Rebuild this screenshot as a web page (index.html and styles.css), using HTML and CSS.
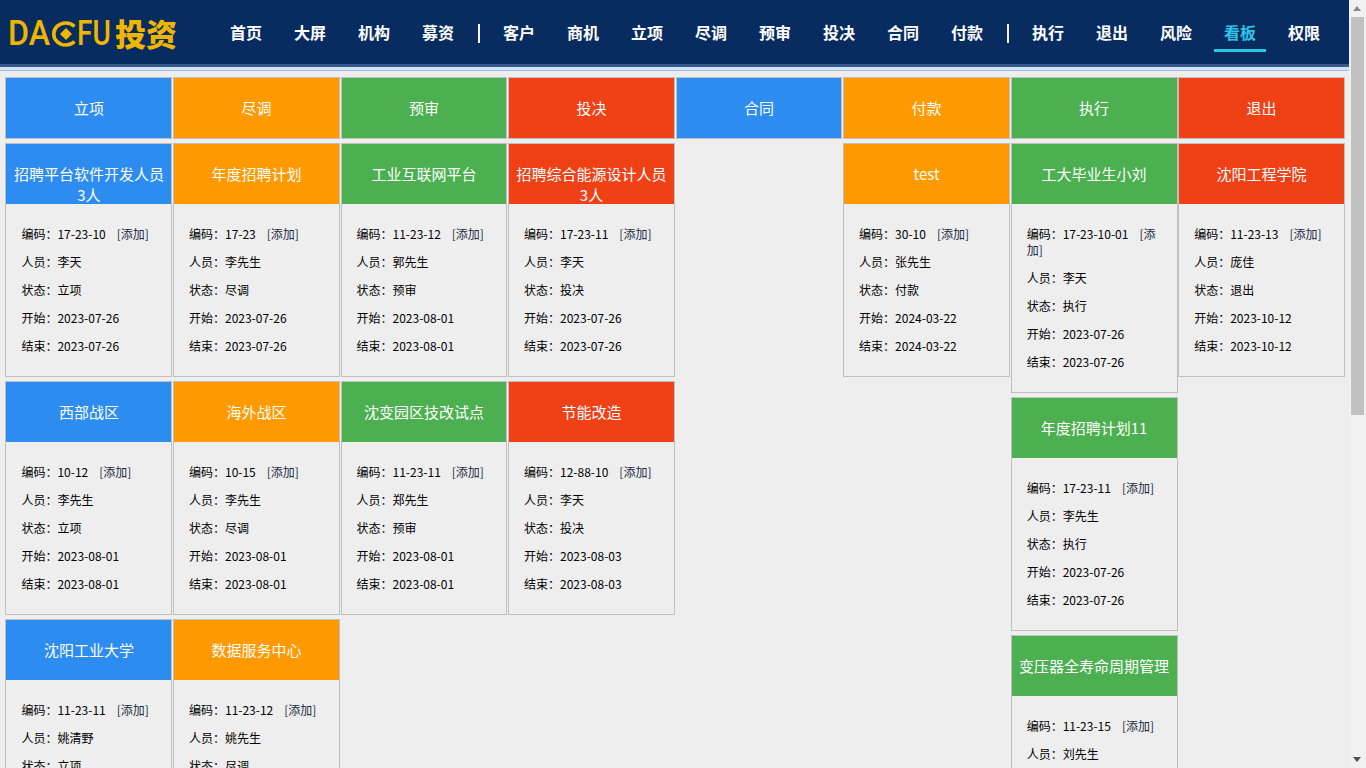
FILE: index.html
```html
<!DOCTYPE html>
<html lang="zh-CN">
<head>
<meta charset="utf-8">
<title>看板</title>
<link rel="stylesheet" href="styles.css">
</head>
<body>
<div class="page">
  <header class="topbar">
    <div class="logo">
      <span class="logo-latin da"><span class="squeeze">DA</span></span><svg class="logo-c" viewBox="0 0 26 26" width="26" height="26" aria-hidden="true"><path d="M23.5 5.5A12 11 0 1 0 23.5 20.5" fill="none" stroke="#eeb600" stroke-width="3.6"/><path d="M15 7L21 13L15 19L9 13Z" fill="#eeb600"/></svg><span class="logo-latin fu"><span class="squeeze">FU</span></span><span class="logo-cjk">投资</span>
    </div>
    <nav class="nav">
      <a class="nav-item">首页</a><a class="nav-item">大屏</a><a class="nav-item">机构</a><a class="nav-item">募资</a>
      <span class="nav-sep"></span>
      <a class="nav-item">客户</a><a class="nav-item">商机</a><a class="nav-item">立项</a><a class="nav-item">尽调</a><a class="nav-item">预审</a><a class="nav-item">投决</a><a class="nav-item">合同</a><a class="nav-item">付款</a>
      <span class="nav-sep"></span>
      <a class="nav-item">执行</a><a class="nav-item">退出</a><a class="nav-item">风险</a><a class="nav-item active">看板</a><a class="nav-item">权限</a>
    </nav>
  </header>
  <div class="rule"></div>
  <main class="board">
    <section class="col blue">
      <div class="col-title">立项</div>
      <article class="card"><h3>招聘平台软件开发人员3人</h3><div class="info"><p>编码&#xFF1A;17-23-10<a class="add">[添加]</a></p><p>人员&#xFF1A;李天</p><p>状态&#xFF1A;立项</p><p>开始&#xFF1A;2023-07-26</p><p>结束&#xFF1A;2023-07-26</p></div></article>
      <article class="card"><h3>西部战区</h3><div class="info"><p>编码&#xFF1A;10-12<a class="add">[添加]</a></p><p>人员&#xFF1A;李先生</p><p>状态&#xFF1A;立项</p><p>开始&#xFF1A;2023-08-01</p><p>结束&#xFF1A;2023-08-01</p></div></article>
      <article class="card"><h3>沈阳工业大学</h3><div class="info"><p>编码&#xFF1A;11-23-11<a class="add">[添加]</a></p><p>人员&#xFF1A;姚清野</p><p>状态&#xFF1A;立项</p></div></article>
    </section>
    <section class="col orange">
      <div class="col-title">尽调</div>
      <article class="card"><h3>年度招聘计划</h3><div class="info"><p>编码&#xFF1A;17-23<a class="add">[添加]</a></p><p>人员&#xFF1A;李先生</p><p>状态&#xFF1A;尽调</p><p>开始&#xFF1A;2023-07-26</p><p>结束&#xFF1A;2023-07-26</p></div></article>
      <article class="card"><h3>海外战区</h3><div class="info"><p>编码&#xFF1A;10-15<a class="add">[添加]</a></p><p>人员&#xFF1A;李先生</p><p>状态&#xFF1A;尽调</p><p>开始&#xFF1A;2023-08-01</p><p>结束&#xFF1A;2023-08-01</p></div></article>
      <article class="card"><h3>数据服务中心</h3><div class="info"><p>编码&#xFF1A;11-23-12<a class="add">[添加]</a></p><p>人员&#xFF1A;姚先生</p><p>状态&#xFF1A;尽调</p></div></article>
    </section>
    <section class="col green">
      <div class="col-title">预审</div>
      <article class="card"><h3>工业互联网平台</h3><div class="info"><p>编码&#xFF1A;11-23-12<a class="add">[添加]</a></p><p>人员&#xFF1A;郭先生</p><p>状态&#xFF1A;预审</p><p>开始&#xFF1A;2023-08-01</p><p>结束&#xFF1A;2023-08-01</p></div></article>
      <article class="card"><h3>沈变园区技改试点</h3><div class="info"><p>编码&#xFF1A;11-23-11<a class="add">[添加]</a></p><p>人员&#xFF1A;郑先生</p><p>状态&#xFF1A;预审</p><p>开始&#xFF1A;2023-08-01</p><p>结束&#xFF1A;2023-08-01</p></div></article>
    </section>
    <section class="col red">
      <div class="col-title">投决</div>
      <article class="card"><h3>招聘综合能源设计人员3人</h3><div class="info"><p>编码&#xFF1A;17-23-11<a class="add">[添加]</a></p><p>人员&#xFF1A;李天</p><p>状态&#xFF1A;投决</p><p>开始&#xFF1A;2023-07-26</p><p>结束&#xFF1A;2023-07-26</p></div></article>
      <article class="card"><h3>节能改造</h3><div class="info"><p>编码&#xFF1A;12-88-10<a class="add">[添加]</a></p><p>人员&#xFF1A;李天</p><p>状态&#xFF1A;投决</p><p>开始&#xFF1A;2023-08-03</p><p>结束&#xFF1A;2023-08-03</p></div></article>
    </section>
    <section class="col blue">
      <div class="col-title">合同</div>
    </section>
    <section class="col orange">
      <div class="col-title">付款</div>
      <article class="card"><h3>test</h3><div class="info"><p>编码&#xFF1A;30-10<a class="add">[添加]</a></p><p>人员&#xFF1A;张先生</p><p>状态&#xFF1A;付款</p><p>开始&#xFF1A;2024-03-22</p><p>结束&#xFF1A;2024-03-22</p></div></article>
    </section>
    <section class="col green">
      <div class="col-title">执行</div>
      <article class="card"><h3>工大毕业生小刘</h3><div class="info"><p>编码&#xFF1A;17-23-10-01<a class="add">[添加]</a></p><p>人员&#xFF1A;李天</p><p>状态&#xFF1A;执行</p><p>开始&#xFF1A;2023-07-26</p><p>结束&#xFF1A;2023-07-26</p></div></article>
      <article class="card"><h3>年度招聘计划11</h3><div class="info"><p>编码&#xFF1A;17-23-11<a class="add">[添加]</a></p><p>人员&#xFF1A;李先生</p><p>状态&#xFF1A;执行</p><p>开始&#xFF1A;2023-07-26</p><p>结束&#xFF1A;2023-07-26</p></div></article>
      <article class="card"><h3>变压器全寿命周期管理</h3><div class="info"><p>编码&#xFF1A;11-23-15<a class="add">[添加]</a></p><p>人员&#xFF1A;刘先生</p></div></article>
    </section>
    <section class="col red">
      <div class="col-title">退出</div>
      <article class="card"><h3>沈阳工程学院</h3><div class="info"><p>编码&#xFF1A;11-23-13<a class="add">[添加]</a></p><p>人员&#xFF1A;庞佳</p><p>状态&#xFF1A;退出</p><p>开始&#xFF1A;2023-10-12</p><p>结束&#xFF1A;2023-10-12</p></div></article>
    </section>
  </main>
</div>
<aside class="scrollbar" aria-hidden="true">
  <span class="arrow up"></span>
  <div class="track"><div class="thumb"></div></div>
  <span class="arrow down"></span>
</aside>
</body>
</html>
```
FILE: styles.css
```css
* { box-sizing: border-box; }
html, body { margin: 0; height: 100%; overflow: hidden; }
body {
  display: flex;
  width: 1366px;
  height: 768px;
  background: #eeeeee;
  color: #000;
  font-family: "Noto Sans CJK SC", "Noto Sans", sans-serif;
  font-size: 12px;
}
.page { width: 1349px; height: 768px; overflow: hidden; flex: none; }

.topbar {
  display: flex;
  height: 64px;
  background: #082b60;
  padding-left: 10px;
}
.logo {
  display: flex;
  align-items: center;
  width: 204px;
  height: 64px;
  padding-top: 3px;
  color: #eeb600;
  white-space: nowrap;
  flex: none;
}
.logo-latin {
  display: block;
  font-family: Roboto, "Liberation Sans", sans-serif;
  font-weight: 500;
  font-size: 35px;
  line-height: 1;
  flex: none;
}
.logo-latin.da { width: 41px; }
.logo-latin.fu { width: 31px; margin-left: 2px; }
.squeeze { display: inline-block; transform-origin: left center; }
.da .squeeze { transform: translateX(-2px) scaleX(0.92); }
.fu .squeeze { transform: translateX(-2px) scaleX(0.8); }
.logo-c { flex: none; }
.logo-cjk {
  margin: -3px 0 0 5px;
  font-size: 31px;
  font-weight: 900;
  line-height: 1;
}
.nav { display: flex; align-items: flex-start; }
.nav-item {
  width: 52px;
  height: 52px;
  margin: 0 6px;
  padding-top: 20px;
  color: #fff;
  font-size: 16px;
  font-weight: 700;
  line-height: 24px;
  text-align: center;
}
.nav-item.active {
  color: #2ec5e6;
  border-bottom: 3px solid #2ec5e6;
}
.nav-sep {
  width: 2px;
  height: 19px;
  margin: 24px 7px 0 8px;
  background: #f2f2f2;
  flex: none;
}

.rule {
  height: 7px;
  border-top: 3px solid #3a5a8c;
  border-bottom: 1px solid #a0bfdf;
  background: #d3e2f4;
}

.board {
  display: grid;
  grid-template-columns: repeat(8, 166.9px);
  column-gap: 0.65px;
  align-items: start;
  padding: 6px 0 0 5.45px;
}
.col { display: flex; flex-direction: column; gap: 4px; min-width: 0; }
.col-title {
  height: 62px;
  border: 1px solid #c0c0c0;
  color: #fff;
  font-size: 15px;
  line-height: 60px;
  text-align: center;
}
.card { border: 1px solid #c0c0c0; background: #eeeeee; }
.card h3 {
  height: 60px;
  margin: 0;
  padding: 19px 5px 0;
  overflow: hidden;
  color: #fff;
  font-size: 15px;
  font-weight: 400;
  line-height: 21px;
  text-align: center;
}
.info { padding: 16px 15px; }
.info p { margin: 0; padding: 6px 0; line-height: 16px; }
.add { margin-left: 11px; color: #1c2a44; }

.blue .col-title, .blue h3 { background: #2d8cf0; }
.orange .col-title, .orange h3 { background: #ff9900; }
.green .col-title, .green h3 { background: #4caf50; }
.red .col-title, .red h3 { background: #f04015; }

.scrollbar {
  display: flex;
  flex-direction: column;
  align-items: center;
  width: 17px;
  height: 768px;
  background: #f1f1f1;
  flex: none;
}
.track { flex: 1; width: 100%; padding: 0 2px; }
.thumb { height: 398px; background: #c1c1c1; }
.arrow { display: block; width: 17px; height: 17px; flex: none; position: relative; }
.arrow::after {
  content: "";
  position: absolute;
  left: 4px;
  border-left: 4px solid transparent;
  border-right: 4px solid transparent;
}
.arrow.up::after { top: 6px; border-bottom: 5px solid #8a8a8a; }
.arrow.down::after { top: 6px; border-top: 5px solid #505050; }
```
